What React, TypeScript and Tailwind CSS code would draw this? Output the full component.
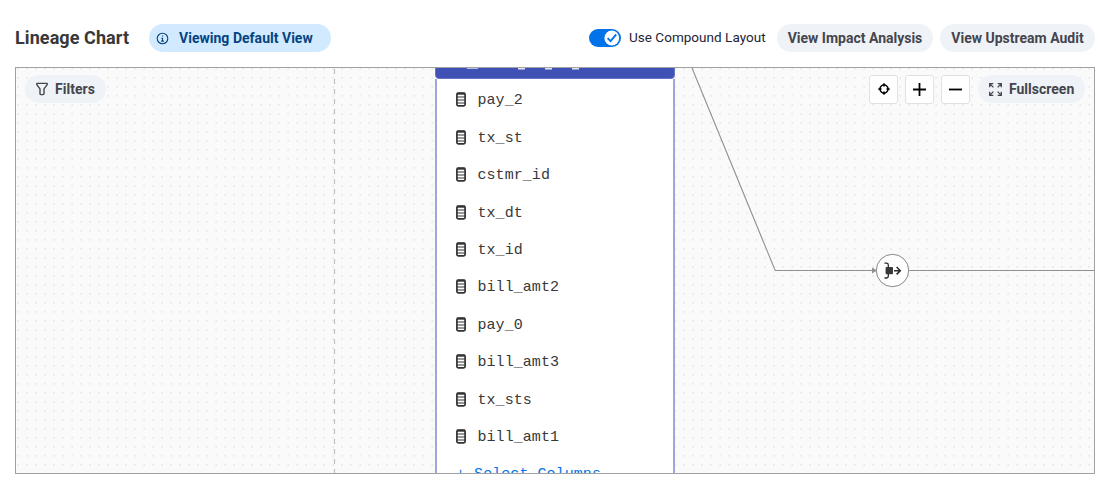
import type { ReactNode } from 'react';

const columns = ['pay_2', 'tx_st', 'cstmr_id', 'tx_dt', 'tx_id', 'bill_amt2', 'pay_0', 'bill_amt3', 'tx_sts', 'bill_amt1'];

function ColumnIcon() {
  return (
    <svg width="10" height="15" viewBox="0 0 10 15" fill="none" stroke="#333" className="-mt-px shrink-0">
      <rect x="0.9" y="1.1" width="8.2" height="12.8" rx="1.3" strokeWidth="1.7" />
      <path d="M1 5h8M1 8h8M1 11h8" strokeWidth="1.2" />
      <path d="M1 1.7h8" strokeWidth="2" />
    </svg>
  );
}

function Square({ children }: { children: ReactNode }) {
  return (
    <button className="flex h-[29px] w-[29px] items-center justify-center rounded-[3px] border border-[#e1e1e3] bg-white">
      {children}
    </button>
  );
}

function Header() {
  return (
    <header className="flex h-[28px] items-center">
      <h1 className="w-[134px] whitespace-nowrap text-[18px] leading-[28px] font-bold tracking-[0.08px] text-[#383838]">Lineage Chart</h1>
      <div className="flex h-[28px] w-[182px] items-center rounded-full bg-[#d2eaff] pl-[7px] text-[#05437f]">
        <svg width="13" height="13" viewBox="0 0 13 13" fill="none" stroke="currentColor" strokeWidth="1.1">
          <circle cx="6.5" cy="6.5" r="5.3" />
          <path d="M5.3 6.2h1.2v2.9M5.1 9.1h2.8M6 4h1.2" />
        </svg>
        <span className="ml-[10px] whitespace-nowrap text-[14px] leading-[26px] font-bold tracking-[0.02px]">Viewing Default View</span>
      </div>
      <label className="ml-auto flex h-[28px] items-center">
        <svg width="33" height="18" viewBox="0 0 33 18">
          <rect width="32" height="18" rx="9" fill="#0073e8" />
          <circle cx="22.8" cy="9" r="7.4" fill="#fff" />
          <path d="m18.6 9.2 3 3 5.6-6.8" fill="none" stroke="#0073e8" strokeWidth="1.9" />
        </svg>
        <span className="-mt-[2px] ml-[7px] w-[141px] whitespace-nowrap text-[13.5px] leading-[26px] tracking-[0.03px] text-[#242436]">Use Compound Layout</span>
      </label>
      <button className="ml-[7px] h-[28px] w-[156px] whitespace-nowrap rounded-full bg-[#eff3f7] text-[14px] leading-[26px] font-bold text-[#45454d]">View Impact Analysis</button>
      <button className="ml-[7px] h-[28px] w-[155px] whitespace-nowrap rounded-full bg-[#eff3f7] text-[14px] leading-[26px] font-bold text-[#45454d]">View Upstream Audit</button>
    </header>
  );
}

function TableNode() {
  return (
    <div className="absolute top-[-26px] left-[419px] h-[460px] w-[240px]">
      <div className="relative h-[36.5px] w-full rounded-[4px] border border-[#6874c6] bg-[#3f51b5]">
        <svg className="absolute top-[23px] left-[30px]" width="120" height="4" fill="#e1e5fa">
          <path d="M1 1.7h11v1H1zM52 2h7v1.5h-7zM79 2h7v1.5h-7zM106 2h7v1.5h-7z" />
        </svg>
      </div>
      <ul className="h-[424px] border-x-2 border-[#9fa6dc] bg-white pt-[3px] pl-[19px] font-['Liberation_Mono',monospace] text-[15px] text-[#383838]">
        {columns.map((name) => (
          <li key={name} className="flex h-[37.44px] items-center">
            <ColumnIcon />
            <span className="mt-[2px] ml-[11.5px] leading-[20px] tracking-[0.06px]">{name}</span>
          </li>
        ))}
        <li className="pt-[9px] leading-[20px] tracking-[0.06px] whitespace-pre text-[#0073e8]">+ Select Columns</li>
      </ul>
    </div>
  );
}

export default function App() {
  return (
    <main className="h-[488px] bg-white pt-[24px] pr-[20px] pl-[15px] font-[Roboto,sans-serif]">
      <Header />
      <section className="relative mt-[15px] h-[407px] w-[1080px] overflow-hidden border border-[#a1a1a1] bg-[#fafafa]">
        <svg className="absolute inset-0" width="1078" height="405" fill="none">
          <defs>
            <pattern id="dots" width="9" height="9" patternUnits="userSpaceOnUse">
              <rect x="1.3" y="0" width="1.8" height="1.7" fill="#e9e9e9" />
            </pattern>
          </defs>
          <rect width="1078" height="405" fill="url(#dots)" />
          <path d="M318.5 0v405" stroke="#c0c0c0" strokeWidth="1.2" strokeDasharray="5 5" strokeDashoffset="-1" />
          <path d="M676 0 759.2 202.5H1078" stroke="#909090" strokeWidth="1.1" />
          <path d="m856 199.5 5 3-5 3z" fill="#909090" />
          <circle cx="876.5" cy="202.5" r="16.2" fill="#fff" stroke="#878787" />
          <path d="M868.5 195.2h2q1.8 0 1.8 1.8v3M868.5 210h2q1.8 0 1.8-1.8v-3" stroke="#292929" strokeWidth="1.3" />
          <rect x="869.6" y="199" width="7.4" height="7.2" rx="1" fill="#383838" />
          <path d="M878 202.7h6.3M880.6 199l3.7 3.7-3.7 3.7" stroke="#292929" strokeWidth="1.5" />
        </svg>
        <TableNode />
        <div className="relative flex items-start justify-between pt-[7px] pr-[9px] pl-[9px] text-[#45454d]">
          <button className="flex h-[28px] w-[81px] items-center rounded-full bg-[#eff3f7] pl-[11px]">
            <svg width="12" height="14" viewBox="0 0 12 14" fill="none" stroke="currentColor" strokeWidth="1.4">
              <path d="M.8 1.4h10.4v1.2L8 6.8v4.8q0 1-1 1H5q-1 0-1-1V6.8L.8 2.6z" strokeLinejoin="round" />
            </svg>
            <span className="ml-[7px] text-[14px] leading-[26px] font-bold tracking-[0.04px]">Filters</span>
          </button>
          <div className="flex gap-[7px] text-black">
            <Square>
              <svg width="12" height="12" viewBox="0 0 12 12" fill="none" stroke="currentColor" strokeWidth="1.5" className="-mt-px">
                <path d="M4.6 2.1Q3.3 2.8 2.1 4.6M7.4 2.1q1.3.7 2.5 2.5M9.9 7.4Q8.7 9.2 7.4 9.9M4.6 9.9Q3.3 9.2 2.1 7.4M6 .3v3.2M6 8.5v3.2M.3 6h3.2M8.5 6h3.2M4.4 2.1h3.2M4.4 9.9h3.2M2.1 4.4v3.2M9.9 4.4v3.2" />
              </svg>
            </Square>
            <Square>
              <svg width="13" height="13" viewBox="0 0 13 13" stroke="currentColor" strokeWidth="1.8"><path d="M6.5 0v13M0 6.5h13" /></svg>
            </Square>
            <Square>
              <svg width="13" height="13" viewBox="0 0 13 13" stroke="currentColor" strokeWidth="1.8"><path d="M0 6.5h13" /></svg>
            </Square>
            <button className="ml-[1px] flex h-[28px] w-[107px] items-center rounded-full bg-[#eff3f7] pl-[11px] text-[#45454d]">
              <svg width="13" height="13" viewBox="0 0 13 13" fill="none" stroke="currentColor" strokeWidth="1.3">
                <path d="M.7 4.3V.7h3.6M.9.9l3.5 3.5M8.7.7h3.6v3.6M12.1.9 8.6 4.4M.7 8.7v3.6h3.6M.9 12.1l3.5-3.5M8.7 12.3h3.6V8.7M12.1 12.1 8.6 8.6" />
              </svg>
              <span className="ml-[7px] text-[14px] leading-[26px] font-bold">Fullscreen</span>
            </button>
          </div>
        </div>
      </section>
    </main>
  );
}
